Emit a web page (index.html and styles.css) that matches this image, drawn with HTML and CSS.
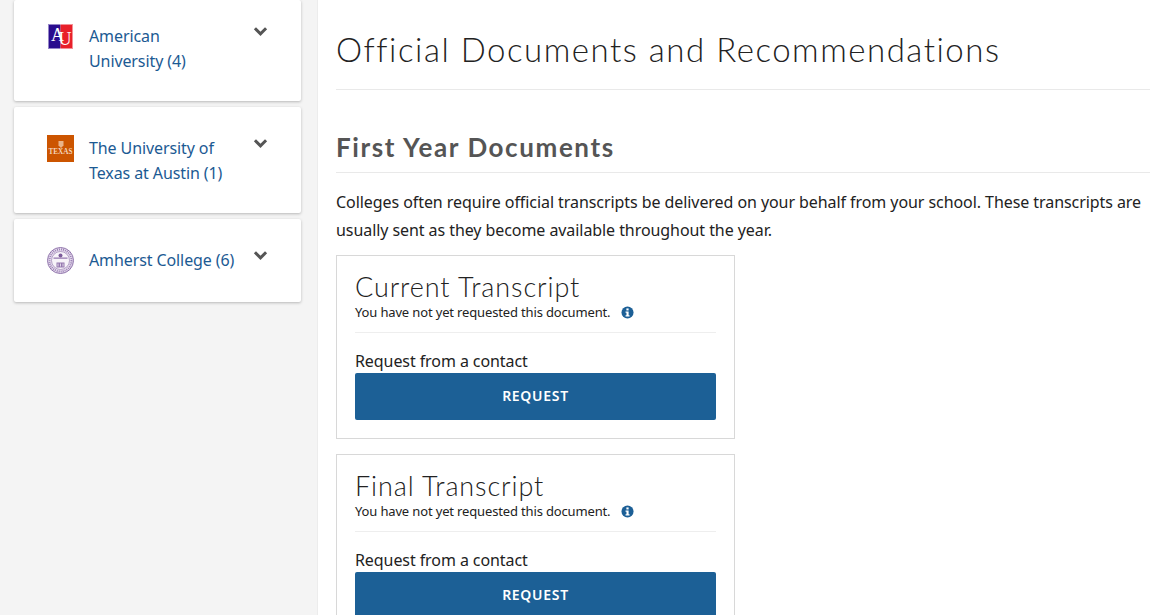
FILE: index.html
```html
<!DOCTYPE html>
<html lang="en">
<head>
<meta charset="utf-8">
<title>Official Documents and Recommendations</title>
<link rel="stylesheet" href="styles.css">
</head>
<body>
<div class="layout">
  <aside class="sidebar">
    <div class="card card-a">
      <svg class="logo logo-au" viewBox="0 0 25 25"><rect width="12.500" height="25" fill="#2a0d8e"/><rect x="12.500" width="12.500" height="25" fill="#e8202a"/><rect x=".5" y=".5" width="24" height="24" fill="none" stroke="#fff" stroke-opacity=".5"/><text class="au" x="3 10.500" y="16.500 20.500">AU</text></svg>
      <a class="name">American<br>University (4)</a>
      <svg class="chev" viewBox="0 0 14 10"><path d="M1.8 2 7 7.200 12.200 2" fill="none" stroke="#555" stroke-width="2.800"/></svg>
    </div>
    <div class="card card-b">
      <svg class="logo logo-tx" viewBox="0 0 27 27"><rect width="27" height="27" fill="#cc5500"/><path d="M11.500 6h5v4.500L14 13l-2.500-2.500z" fill="#e9b48a"/><text x="13.500" y="19.300" class="tx">TEXAS</text></svg>
      <a class="name">The University of<br>Texas at Austin (1)</a>
      <svg class="chev" viewBox="0 0 14 10"><path d="M1.8 2 7 7.200 12.200 2" fill="none" stroke="#555" stroke-width="2.800"/></svg>
    </div>
    <div class="card card-c">
      <svg class="logo logo-am" viewBox="0 0 27 27"><circle cx="13.500" cy="13.500" r="13" fill="#e6dcee" stroke="#8f73aa"/><circle cx="13.500" cy="13.500" r="11" fill="none" stroke="#9c82b5" stroke-width="2" stroke-dasharray="1 1"/><circle cx="13.500" cy="13.500" r="9" fill="#f7f3f9" stroke="#8f73aa" stroke-width=".6"/><path d="M9.500 15.500h8v5h-8zM6.500 10.500h14v1.200h-14z" fill="#9578b0"/><path d="M11 16.500v3M13.500 16.500v3M16 16.500v3" stroke="#f7f3f9" stroke-width=".8"/><circle cx="13.500" cy="8.500" r="2" fill="#7d5c9b"/></svg>
      <a class="name">Amherst College (6)</a>
      <svg class="chev" viewBox="0 0 14 10"><path d="M1.8 2 7 7.200 12.200 2" fill="none" stroke="#555" stroke-width="2.800"/></svg>
    </div>
  </aside>
  <main class="main">
    <h1 class="title">Official Documents and Recommendations</h1>
    <h2 class="section">First Year Documents</h2>
    <p class="intro">Colleges often require official transcripts be delivered on your behalf from your school. These transcripts are usually sent as they become available throughout the year.</p>
    <section class="doc">
      <h3 class="doc-title">Current Transcript</h3>
      <div class="status">You have not yet requested this document.<svg class="info" viewBox="0 0 14 14"><circle cx="7" cy="7" r="6.500" fill="#1c5f96"/><rect x="5.800" y="2.600" width="2.400" height="2.200" fill="#fff"/><path d="M4.900 5.900h3.300v4.100h1v1.300H4.900V10h1V7.200h-1z" fill="#fff"/></svg></div>
      <div class="label">Request from a contact</div>
      <button class="btn">REQUEST</button>
    </section>
    <section class="doc">
      <h3 class="doc-title">Final Transcript</h3>
      <div class="status">You have not yet requested this document.<svg class="info" viewBox="0 0 14 14"><circle cx="7" cy="7" r="6.500" fill="#1c5f96"/><rect x="5.800" y="2.600" width="2.400" height="2.200" fill="#fff"/><path d="M4.900 5.900h3.300v4.100h1v1.300H4.900V10h1V7.200h-1z" fill="#fff"/></svg></div>
      <div class="label">Request from a contact</div>
      <button class="btn">REQUEST</button>
    </section>
  </main>
</div>
</body>
</html>
```
FILE: styles.css
```css
html, body { margin: 0; padding: 0; height: 615px; overflow: hidden; background: #fff; }
body { font-family: "Noto Sans", "Liberation Sans", sans-serif; color: #222; }
.layout { display: flex; height: 615px; }
.sidebar { width: 318px; flex: none; box-sizing: border-box; background: #f4f4f4; border-right: 1px solid #ececec; padding-left: 14px; display: flex; flex-direction: column; gap: 6px; }
.card { width: 287px; box-sizing: border-box; background: #fff; border-radius: 2px; box-shadow: 0 1px 3px rgba(0,0,0,.25); display: flex; align-items: flex-start; position: relative; }
.card-a { height: 101px; padding: 24px 0 0 33px; }
.card-b { height: 106px; padding: 29px 0 0 33px; }
.card-c { height: 83px; padding: 29px 0 0 33px; }
.logo { flex: none; width: 27px; height: 27px; display: block; margin-top: -1px; }
.logo-au { width: 25px; height: 25px; margin: 0 1px; }
.au { font-family: "Liberation Serif", serif; font-size: 18px; fill: #fff; }
.tx { font-family: "Liberation Serif", serif; font-size: 7.200px; font-weight: 700; fill: #f3d4ba; text-anchor: middle; }
.name { margin-left: 15px; width: 164px; font-size: 16px; line-height: 25px; color: #1c5a93; letter-spacing: -.1px; }
.chev { flex: none; width: 15px; height: 11px; margin-top: 2px; }
.main { width: 814px; margin-left: 18px; }
.title { margin: 0; height: 90px; box-sizing: border-box; border-bottom: 1px solid #e9e9e9; padding-top: 29px; font-family: Lato, sans-serif; font-weight: 300; font-size: 33px; line-height: 40px; letter-spacing: 1.520px; color: #222; }
.section { margin: 40px 0 0; height: 43px; box-sizing: border-box; border-bottom: 1px solid #e9e9e9; font-family: Lato, sans-serif; font-weight: 700; font-size: 26px; line-height: 34px; letter-spacing: 1.600px; color: #555; }
.intro { margin: 15px 0 0; font-size: 16px; line-height: 28px; letter-spacing: -.07px; color: #222; }
.doc { width: 399px; box-sizing: border-box; border: 1px solid #d8d8d8; padding: 15px 18px 18px; margin-top: 0; margin-bottom: 15px; }
.intro + .doc { margin-top: 11px; }
.doc-title { margin: 0; font-family: Lato, sans-serif; font-weight: 300; font-size: 27px; line-height: 32px; letter-spacing: .9px; color: #222; }
.status { font-size: 13px; line-height: 17px; padding-top: 1px; letter-spacing: -.15px; padding-bottom: 11px; border-bottom: 1px solid #eee; display: flex; align-items: center; }
.info { width: 13px; height: 13px; margin-left: 11px; }
.label { margin: 18px 0 2px; font-size: 16px; line-height: 20px; letter-spacing: -.08px; }
.btn { display: block; width: 100%; height: 47px; border: 0; border-radius: 2px; padding: 0 0 3px; background: #1c6096; color: #fff; font-family: "Noto Sans", sans-serif; font-weight: 600; font-size: 14px; letter-spacing: .7px; }
```
